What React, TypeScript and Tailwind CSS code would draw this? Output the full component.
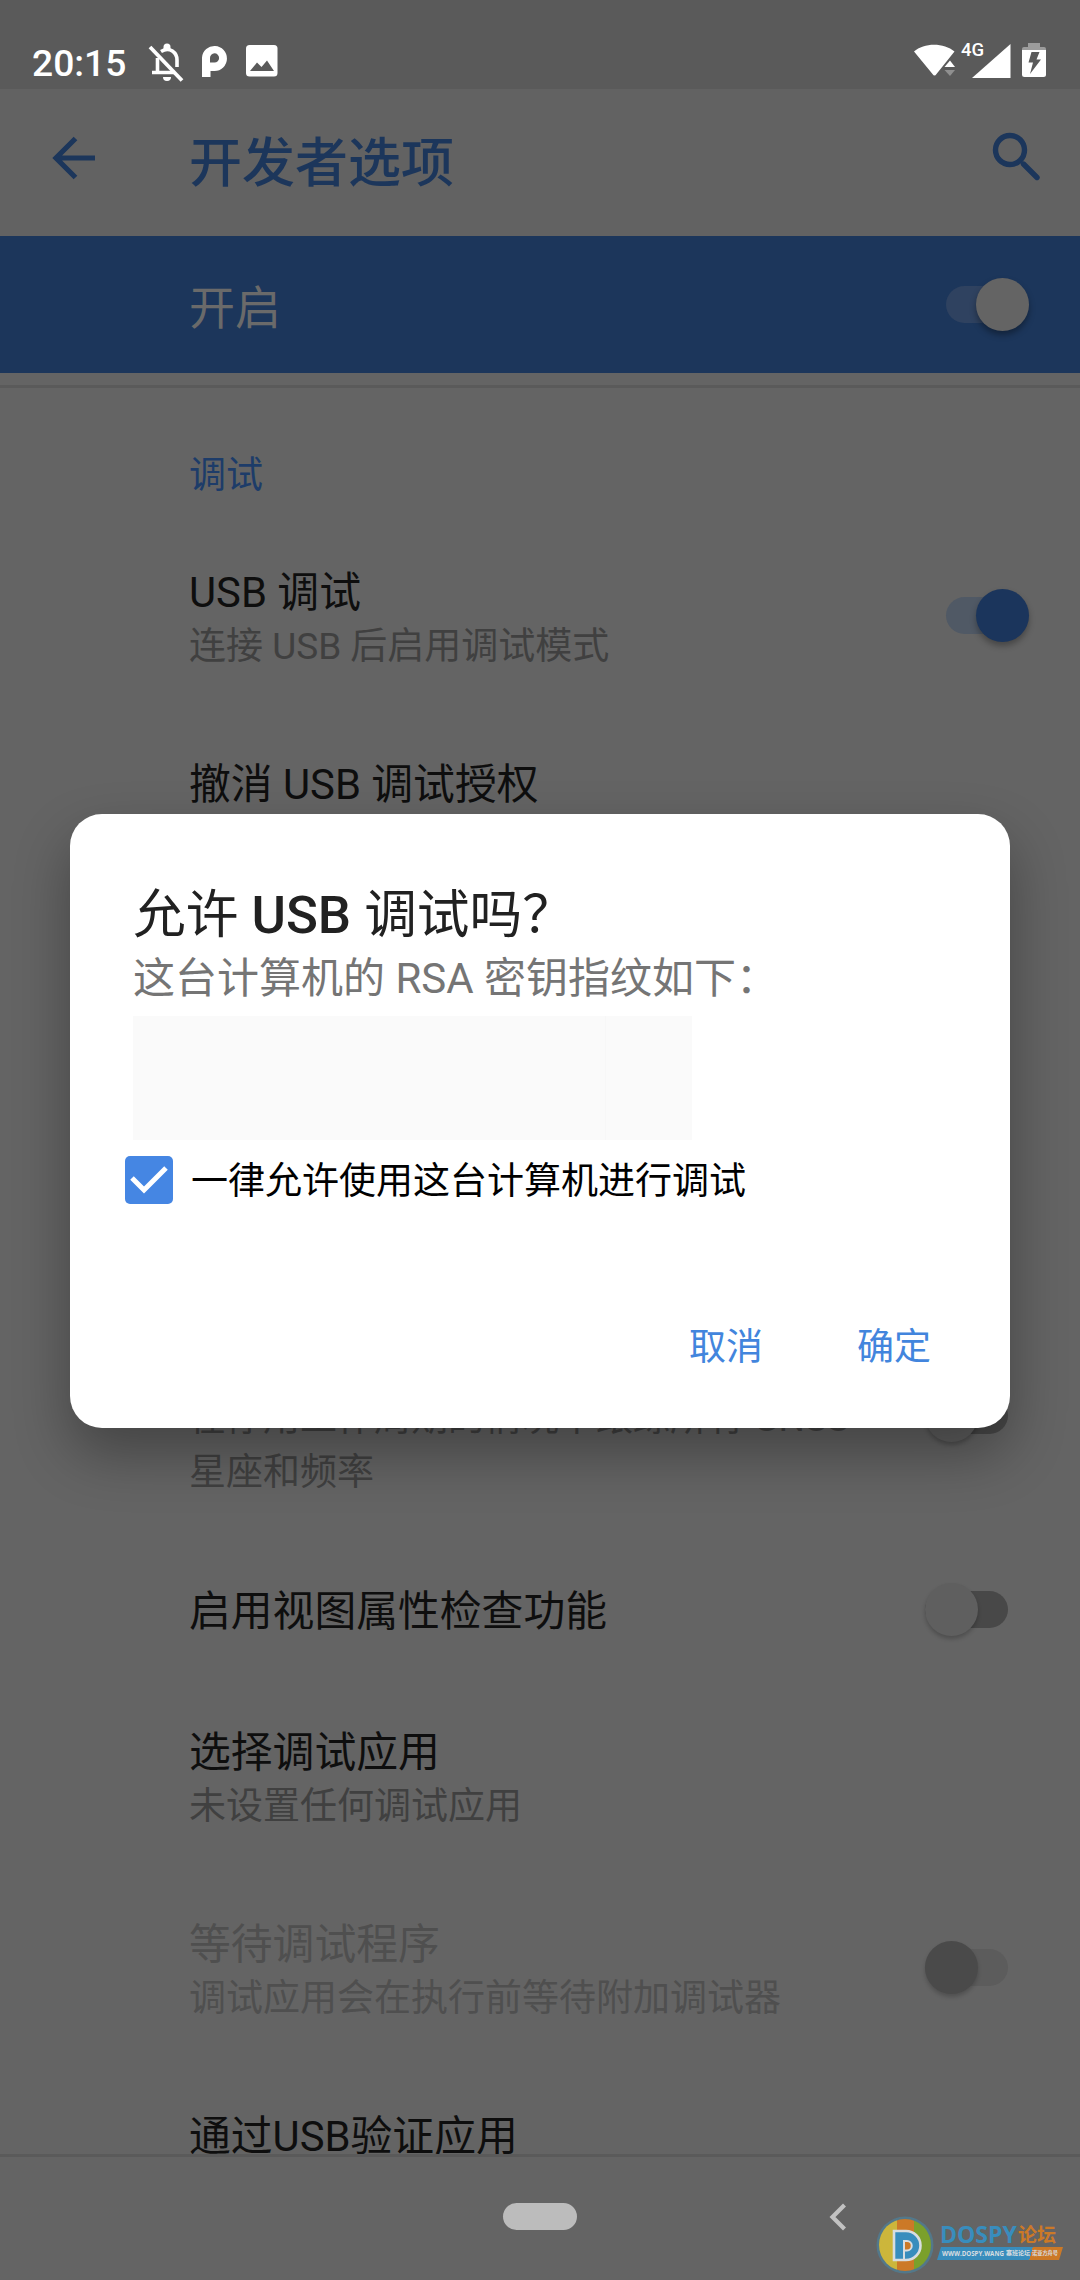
import type { ReactNode } from 'react';

type SwitchKind = 'bar' | 'on' | 'off' | 'disabled';

const trackColor: Record<SwitchKind, string> = {
  bar: 'bg-[#2f4260]',
  on: 'bg-[#505965]',
  off: 'bg-[#484848]',
  disabled: 'bg-[#5c5c5c]',
};

const thumbColor: Record<SwitchKind, string> = {
  bar: 'ml-auto bg-[#646464] shadow-[0_4px_6px_rgba(0,0,0,0.35)]',
  on: 'ml-auto bg-[#1b355c] shadow-[0_4px_6px_rgba(0,0,0,0.3)]',
  off: 'bg-[#5f5f5f] shadow-[0_3px_4px_rgba(0,0,0,0.22)]',
  disabled: 'bg-[#4a4a4a] shadow-[0_3px_4px_rgba(0,0,0,0.2)]',
};

function Switch({ kind }: { kind: SwitchKind }) {
  const on = kind === 'bar' || kind === 'on';
  return (
    <div className={`relative flex h-[53px] w-[83px] shrink-0 items-center ${on ? 'mr-[51px]' : 'mr-[72px]'}`}>
      <div className={`absolute inset-x-0 top-2 h-[37px] rounded-full ${trackColor[kind]}`} />
      <div className={`relative size-[53px] rounded-full ${thumbColor[kind]}`} />
    </div>
  );
}

interface RowProps {
  title?: string;
  summary?: ReactNode;
  kind?: SwitchKind;
  disabled?: boolean;
  className: string;
  switchClass?: string;
}

function Row({ title, summary, kind, disabled, className, switchClass = '' }: RowProps) {
  return (
    <div className={`flex shrink-0 items-start pl-[189px] ${className}`}>
      <div className="flex-1 whitespace-nowrap pt-[2px]">
        <div className={`h-[54px] text-[41.800px] leading-[54px] ${disabled ? 'text-[#4f4f4f]' : 'text-[#0e0e0e]'}`}>{title}</div>
        {summary && (
          <div className={`text-[37px] leading-[54px] ${disabled ? 'text-[#4f4f4f]' : 'text-[#404040]'}`}>{summary}</div>
        )}
      </div>
      {kind && (
        <div className={switchClass}>
          <Switch kind={kind} />
        </div>
      )}
    </div>
  );
}

function StatusBar() {
  return (
    <div className="flex h-[89px] shrink-0 bg-[#5a5a5a] text-white">
      <div className="ml-8 mt-[42px] h-[42px] w-[94px] text-[37.200px] font-medium leading-[42px]">20:15</div>
      <svg className="ml-[21px] mt-[41px]" width="40" height="42" viewBox="0 0 40 42" fill="none" stroke="#fff">
        <path d="M10.500 17V31M5 31.500H28M14 10.500C23 5 30 12 30 19V26" strokeWidth="3.600" />
        <path d="M16.500 9V6a3.500 3.500 0 0 1 7 0V9Z" fill="#fff" stroke="none" />
        <path d="M16 36h8a4 4 0 0 1-8 0Z" fill="#fff" stroke="none" />
        <path d="M3 6 35 39.500" strokeWidth="3.800" />
      </svg>
      <svg className="ml-[14px] mt-[45px]" width="27" height="33" viewBox="0 0 27 33">
        <path
          fill="#fff"
          fillRule="evenodd"
          d="M1 32V12.500A12.500 12.500 0 1 1 13.500 26H9.500V32ZM13.500 8.300A4.600 4.600 0 0 0 9 13V17.500H13.500A4.600 4.600 0 0 0 13.500 8.300Z"
        />
      </svg>
      <svg className="ml-[17px] mt-[45px]" width="34" height="33" viewBox="0 0 34 33">
        <rect x="1" y="0" width="31.500" height="31.500" rx="3.500" fill="#fff" />
        <path d="M5 26 12 17.500 16.500 22 22 15.500 29 26Z" fill="#5a5a5a" />
      </svg>
      <svg className="ml-auto mt-[43px]" width="44" height="34" viewBox="0 0 44 34">
        <path d="M1 8.500C11-.500 31-.500 41.500 8.500L23.500 31Q21.500 34 19.500 31Z" fill="#fff" />
        <path d="M30 25 37.500 15H44V34H30Z" fill="#5a5a5a" />
        <path d="M31.500 24 37 17.500 42 24Z" fill="#fff" />
        <path d="M31.500 27H42L37 33Z" fill="#8f8f8f" />
      </svg>
      <div className="ml-1 mt-[40px] h-5 w-[24px] text-[18.500px] font-medium leading-5">4G</div>
      <svg className="-ml-[13px] mt-[43px]" width="39" height="36" viewBox="0 0 39 36">
        <path d="M38.500 1V35H0Z" fill="#fff" />
      </svg>
      <svg className="ml-[10px] mr-[33px] mt-[43px]" width="26" height="35" viewBox="0 0 26 35">
        <path d="M7 0H19V4H23Q25 4 25 6V8H1V6Q1 4 3 4H7Z" fill="#9c9c9c" />
        <path d="M1 7H25V31.500Q25 34 22.500 34H3.500Q1 34 1 31.500Z" fill="#fff" />
        <path d="M10.500 9H18.500L15.500 16.500H20L9 31 12 19.500H7.500Z" fill="#5a5a5a" />
      </svg>
    </div>
  );
}

function Header() {
  return (
    <div className="flex h-[147px] shrink-0 items-center bg-[#626262] text-[#1c365b]">
      <svg className="-mt-[10px] ml-[52px]" width="44" height="44" viewBox="0 0 44 44" fill="none" stroke="currentColor" strokeWidth="5.200">
        <path d="M43 22H5M23.500 2.500 4 22 23.500 41.500" />
      </svg>
      <div className="ml-[93px] mt-[3px] text-[53px] font-medium leading-[60px]">开发者选项</div>
      <svg className="-mt-3 ml-auto mr-[39px]" width="49" height="49" viewBox="0 0 49 49" fill="none" stroke="currentColor">
        <circle cx="18" cy="18" r="14.500" strokeWidth="5.400" />
        <path d="M31.500 32 45 45.500" strokeWidth="5.400" strokeLinecap="round" />
      </svg>
    </div>
  );
}

function NavBar() {
  return (
    <div className="flex h-[126px] shrink-0 border-t-[3px] border-[#5a5a5a] bg-[#646464]">
      <div className="ml-[503px] mt-[46px] h-[27px] w-[74px] rounded-full bg-[#bcbcbc]" />
      <svg className="ml-[252px] mt-[46px]" width="18" height="28" viewBox="0 0 18 28" fill="none" stroke="#c2c2c2" strokeWidth="4.200">
        <path d="M15.500 2 3.500 14 15.500 26" />
      </svg>
      <Watermark />
    </div>
  );
}

function Watermark() {
  return (
    <div className="ml-[28px] mt-[57px] flex h-[60px] w-[190px] items-start">
      <svg className="shrink-0" width="60" height="60" viewBox="0 0 60 60">
        <defs>
          <clipPath id="disc">
            <circle cx="30" cy="31" r="26" />
          </clipPath>
        </defs>
        <circle cx="30" cy="31" r="28.500" fill="#53788a" />
        <g clipPath="url(#disc)">
          <rect width="22" height="60" fill="#ccb63b" />
          <rect x="22" width="17" height="60" fill="#cc7927" />
          <rect x="39" width="21" height="60" fill="#7ba02b" />
        </g>
        <path
          d="M19 17H31A14 14 0 0 1 31 46H19Z"
          fill="#388dbd"
          stroke="#d8dde0"
          strokeWidth="2.600"
        />
        <path d="M29 46V27H32A4.700 4.700 0 0 1 32 36.500H29" fill="#cc7927" stroke="#d8dde0" strokeWidth="2" />
      </svg>
      <div className="ml-[2px] mt-[8px]">
        <div className="flex h-6 items-center whitespace-nowrap pl-[3px] font-bold leading-6">
          <span className="w-[78px] font-['Open_Sans','Noto_Sans',sans-serif] text-[23px]/6 text-[#388dbd]">DOSPY</span>
          <span className="mt-[3px] text-[19px]/6 text-[#cc7927]">论坛</span>
        </div>
        <div className="mt-px flex h-[13px] w-[126px] items-center justify-between overflow-hidden whitespace-nowrap bg-[linear-gradient(105deg,#388dbd_74%,#cc7927_74%)] px-[5px] font-['Open_Sans','Noto_Sans_CJK_SC',sans-serif] text-[6.200px] font-bold leading-[13px] text-[#d8dde0] [clip-path:polygon(4px_0,100%_0,122px_100%,0_100%)]">
          <span>WWW.DOSPY.WANG</span>
          <span className="text-[6px]">塞班论坛</span>
          <span className="text-[5.200px]">诺亚方舟号</span>
        </div>
      </div>
    </div>
  );
}

function Dialog() {
  return (
    <div className="absolute left-[70px] top-[814px] flex h-[614px] w-[940px] flex-col whitespace-nowrap rounded-[32px] bg-white shadow-[0_26px_56px_rgba(0,0,0,0.32)]">
      <div className="ml-[63px] mt-[70px] h-[62px] text-[52.700px] leading-[62px] text-[#212121]">
        允许 <span className="font-medium">USB</span> 调试吗？
      </div>
      <div className="ml-[63px] mt-[6px] h-[54px] text-[42px] leading-[54px] text-[#757575]">这台计算机的 RSA 密钥指纹如下：</div>
      <div className="ml-[63px] mt-[10px] flex h-[124px] w-[559px] bg-[#fafafa]">
        <div className="ml-[472px] w-px bg-[#f7f7f7]" />
      </div>
      <div className="ml-[55px] mt-4 flex h-12 items-center">
        <svg width="48" height="48" viewBox="0 0 48 48">
          <rect width="48" height="48" rx="5" fill="#4586e3" />
          <path d="M7 22 19 34 41 12" fill="none" stroke="#fff" strokeWidth="5" />
        </svg>
        <div className="ml-[18px] mt-[3px] text-[37px] leading-[48px] text-black">一律允许使用这台计算机进行调试</div>
      </div>
      <div className="ml-auto mr-[79px] mt-[120px] flex gap-[94px] text-[37px] leading-[48px] text-[#4285dd]">
        <span>取消</span>
        <span>确定</span>
      </div>
    </div>
  );
}

export default function App() {
  return (
    <div className="relative flex h-[2280px] w-[1080px] flex-col overflow-hidden bg-[#646464] font-['Roboto','Noto_Sans_CJK_SC',sans-serif]" lang="zh-CN">
      <StatusBar />
      <Header />
      <div className="flex h-[137px] shrink-0 items-center bg-[#1c365b] pl-[189px]">
        <div className="flex-1 pt-[6px] text-[46px] leading-[60px] text-[#6a6a6a]">开启</div>
        <Switch kind="bar" />
      </div>
      <div className="flex h-[1781px] shrink-0 flex-col overflow-hidden">
        <div className="mt-3 h-[3px] shrink-0 bg-[#5a5a5a]" />
        <div className="h-[131px] shrink-0 pl-[189px] pt-[61px] text-[37px] leading-[54px] text-[#1d3c69]">调试</div>
        <Row className="h-[192px] pt-[45px]" title="USB 调试" summary="连接 USB 后启用调试模式" kind="on" switchClass="mt-[25px]" />
        <Row className="h-[580px] pt-[45px]" title="撤消 USB 调试授权" />
        <Row
          className="h-[250px] pt-[45px]"
          summary={
            <>
              在停用工作周期的情况下跟踪所有 GNSS
              <br />
              星座和频率
            </>
          }
          kind="off"
          switchClass="mt-[53px]"
        />
        <Row className="h-[138px] pt-[42px]" title="启用视图属性检查功能" kind="off" />
        <Row className="h-[192px] pt-[45px]" title="选择调试应用" summary="未设置任何调试应用" />
        <Row
          className="h-[192px] pt-[45px]"
          title="等待调试程序"
          summary="调试应用会在执行前等待附加调试器"
          kind="disabled"
          disabled
          switchClass="mt-[25px]"
        />
        <Row className="h-[138px] pt-[45px]" title="通过USB验证应用" />
      </div>
      <NavBar />
      <Dialog />
    </div>
  );
}
